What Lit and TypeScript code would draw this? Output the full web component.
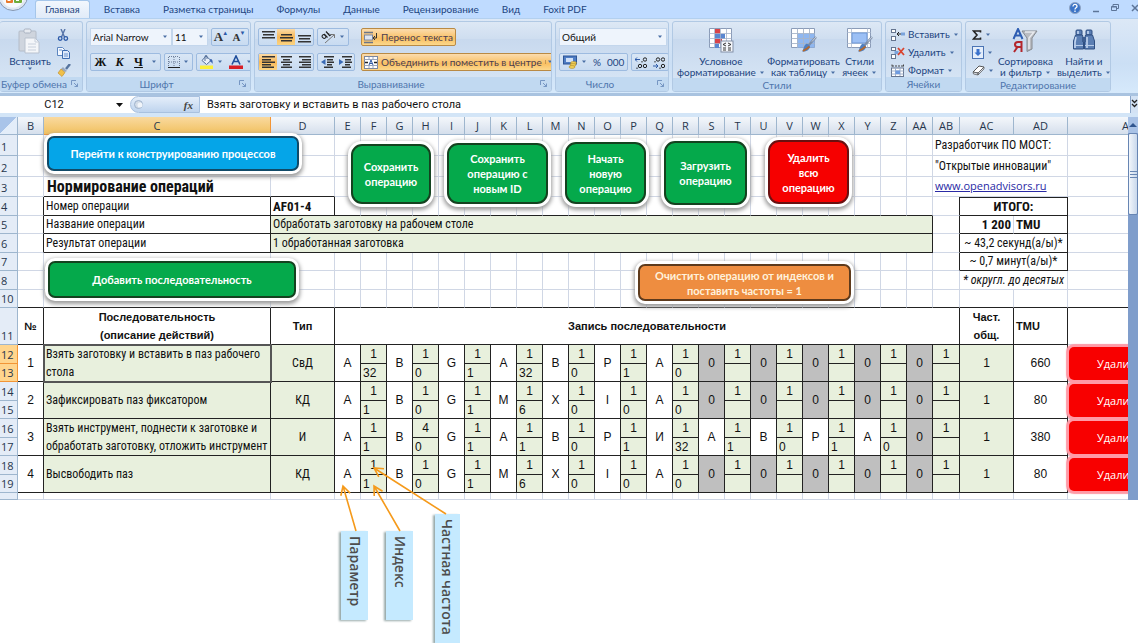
import { LitElement, html, css, svg, nothing } from "lit";
import { customElement, property } from "lit/decorators.js";
import { classMap } from "lit/directives/class-map.js";

const caret = html`<svg class="caret" width="6" height="4" viewBox="0 0 6 4"><path d="M1 .5h4L3 3z" fill="#4a6fa5" /></svg>`;

const lines = (rows: number[][]) =>
  svg`${rows.map(([x, y, w]) => svg`<rect x=${x} y=${y} width=${w} height="1.5" fill="#333" />`)}`;

const brush = svg`<path d="M25 7l-8 9" stroke="#7d8ea8" stroke-width="2.4" /><path d="M25 7l-4 4.500" stroke="#c8d2e2" stroke-width="1" /><path d="M16 13.500l3 2.500c0 4-4 6-8 5.500 2-2 1-6 5-8z" fill="#4f7fc0" /><path d="M12 21l4-2.500 2.500-2" stroke="#b5682c" stroke-width="2" fill="none" />`;

const icons: Record<string, unknown> = {
  paste: html`<svg width="24" height="26" viewBox="0 0 24 26"><rect x="1" y="3" width="17" height="20" rx="1" fill="#cfd5de" stroke="#b4bcc8" /><rect x="6" y="1" width="7" height="4" rx="1.500" fill="#e6eaf0" stroke="#a9b2c0" /><path d="M7 10h10l4 4v11H7z" fill="#f4f6f9" stroke="#b9c2cf" /><path d="M17 10v4h4M10 16h8M10 19h8M10 22h8" stroke="#c8d0dc" fill="none" /></svg>`,
  cut: html`<svg width="12" height="12" viewBox="0 0 12 12"><path d="M4 0l3.500 8M8 0L4.500 8" stroke="#5674a8" stroke-width="1.400" /><circle cx="3.200" cy="9.500" r="1.800" fill="none" stroke="#2c5aa8" stroke-width="1.300" /><circle cx="8.800" cy="9.500" r="1.800" fill="none" stroke="#2c5aa8" stroke-width="1.300" /></svg>`,
  copy: html`<svg width="14" height="12" viewBox="0 0 14 12"><path d="M.5.5h5l2 2v6h-7z" fill="#f4f8ff" stroke="#5c86c0" /><path d="M5.500 3.500h5l2 2v6h-7z" fill="#dfeafb" stroke="#3f6db0" /><path d="M7 7h4M7 9h4M2 3h3" stroke="#6b93cc" /></svg>`,
  painter: html`<svg width="14" height="13" viewBox="0 0 14 13"><path d="M13 0L9 5" stroke="#56749f" stroke-width="2.400" /><path d="M6 3l4 4-2 1-4-3z" fill="#9aa8bd" /><path d="M4 5l4 3.500-3 4L1 9z" fill="#f0c04a" stroke="#c08a20" stroke-width=".6" /></svg>`,
  borders: html`<svg width="12" height="12" viewBox="0 0 12 12"><path d="M.5 1v10M6 1v10M11.500 1v10M1 .5h10M1 6h10" stroke="#6c7d98" stroke-dasharray="1 1" /><path d="M0 11.500h12" stroke="#222" /></svg>`,
  fill: html`<svg width="14" height="14" viewBox="0 0 14 14"><path d="M6 1l5 4.500-4.500 4L2 5.500z" fill="#e9f0fa" stroke="#55709a" /><path d="M5 6V1.500c0-1.500 2-1.500 2 0V4" stroke="#55709a" fill="none" /><path d="M10.500 4c2 0 2.500 2.500 2 5-1-2-2-2.500-3-3z" fill="#3a64b0" /><rect y="10.500" width="13" height="3.500" fill="#fbf03a" /></svg>`,
  fontColor: html`<svg width="14" height="14" viewBox="0 0 14 14"><path d="M3 9.500L7 1l4 8.500M4.500 6.500h5" stroke="#1f4e9c" stroke-width="1.600" fill="none" /><rect y="10.500" width="14" height="3.500" fill="#d81f26" /></svg>`,
  top: html`<svg width="13" height="12" viewBox="0 0 13 12">${lines([[0, 0, 13], [1, 3, 11], [0, 6, 13]])}</svg>`,
  middle: html`<svg width="13" height="12" viewBox="0 0 13 12">${lines([[1, 3, 11], [0, 6, 13], [1, 9, 11]])}</svg>`,
  bottom: html`<svg width="13" height="12" viewBox="0 0 13 12">${lines([[0, 4, 13], [1, 7, 11], [0, 10, 13]])}</svg>`,
  left: html`<svg width="13" height="12" viewBox="0 0 13 12">${lines([[0, 0, 13], [0, 3, 9], [0, 5.5, 13], [0, 8, 9], [0, 10.5, 12]])}</svg>`,
  center: html`<svg width="13" height="12" viewBox="0 0 13 12">${lines([[1, 0, 11], [3, 3, 7], [1, 5.5, 11], [3, 8, 7], [1, 10.5, 11]])}</svg>`,
  right: html`<svg width="13" height="12" viewBox="0 0 13 12">${lines([[1, 0, 12], [4, 3, 9], [1, 5.5, 12], [4, 8, 9], [1, 10.5, 12]])}</svg>`,
  outdent: html`<svg width="13" height="12" viewBox="0 0 13 12">${lines([[3, 0, 10], [6, 3, 6], [6, 5.5, 7], [6, 8, 5], [3, 10.5, 9]])}<path d="M4.500 3v6L0 6z" fill="#3a6ab5" /></svg>`,
  indent: html`<svg width="13" height="12" viewBox="0 0 13 12">${lines([[3, 0, 10], [6, 3, 6], [6, 5.5, 7], [6, 8, 5], [3, 10.5, 9]])}<path d="M0 3v6l4.500-3z" fill="#3a6ab5" /></svg>`,
  orient: html`<svg width="15" height="13" viewBox="0 0 15 13"><path d="M4 12L13 4M10 3.500h3.500V7" stroke="#777" fill="none" /><ellipse cx="3" cy="5.500" rx="2" ry="1.700" fill="none" stroke="#222" transform="rotate(45 3 5.500)" /><path d="M3 3l3.500 3.500M5 .5L9 5M10 3.500c-1 1.500-3 1-2-1" stroke="#222" fill="none" stroke-width="1.200" /></svg>`,
  wrap: html`<svg width="14" height="13" viewBox="0 0 14 13"><path d="M0 1.500h9M0 11.500h9" stroke="#6b7588" stroke-width="1.500" /><rect x=".5" y="4" width="8" height="5" fill="#dfe5ef" stroke="#7a86a0" /><path d="M12.500 2v5H9.500M11 5L9 7l2 2" stroke="#333" fill="none" /></svg>`,
  merge: html`<svg width="14" height="13" viewBox="0 0 14 13"><rect x=".5" y=".5" width="13" height="12" fill="#fff" stroke="#7a86a0" /><path d="M.5 3.500h13M.5 9.500h13M5 1v3M9 1v3M5 9v3M9 9v3" stroke="#9aa6bd" /><path d="M1 6.500h3M10 6.500h3" stroke="#222" stroke-width="1.500" /><path d="M5 9l2-5 2 5M6 7.500h2" stroke="#2c57a5" fill="none" /></svg>`,
  money: html`<svg width="15" height="14" viewBox="0 0 15 14"><rect x=".5" y="1" width="13" height="8" fill="#4f7dc4" stroke="#2d5596" /><rect x="3" y="3" width="7" height="4" fill="#cfe0f8" /><ellipse cx="10.500" cy="8" rx="3" ry="1.400" fill="#f3d25c" stroke="#ae8a1f" stroke-width=".6" /><ellipse cx="10" cy="10" rx="3" ry="1.400" fill="#f3d25c" stroke="#ae8a1f" stroke-width=".6" /><ellipse cx="9" cy="12" rx="3" ry="1.400" fill="#f3d25c" stroke="#ae8a1f" stroke-width=".6" /></svg>`,
  cond: html`<svg width="26" height="25" viewBox="0 0 26 25"><path d="M1.500.5h22v19h-22z" fill="#fff" stroke="#8b9cb8" /><rect x="7" y="1" width="5" height="5" fill="#d8434a" /><rect x="7" y="6" width="10" height="5" fill="#5a86d0" /><rect x="7" y="11" width="7" height="5" fill="#d8434a" /><rect x="7" y="16" width="4" height="4" fill="#5a86d0" /><path d="M1.500 5.500h22M1.500 10.500h22M1.500 15.500h22M6.500.5v19M12.500.5v19M18.500.5v19" stroke="#a6b4ca" stroke-width=".8" /><rect x="13" y="13" width="12" height="11" fill="#f4f6fa" stroke="#8290a8" /><path d="M18 15l-3 1.500 3 1.500M15 20h3M15 22h3M20 15l3 1.500-3 1.500M20 20h3M20 22h3" stroke="#222" fill="none" stroke-width=".9" /></svg>`,
  tableFmt: html`<svg width="26" height="25" viewBox="0 0 26 25"><path d="M.5.500h23v19H.5z" fill="#fff" stroke="#8b9cb8" /><path d="M6 5.500h17.500v14H6z" fill="#8fb7f0" /><path d="M.5 5.500h23M.5 10.500h23M.5 15.500h23M6.500.5v19M12.500.5v19M18.500.5v19" stroke="#a6b4ca" stroke-width=".9" /><g transform="translate(0 2)">${brush}</g></svg>`,
  cellFmt: html`<svg width="26" height="25" viewBox="0 0 26 25"><path d="M.5.500h23v19H.5z" fill="#fff" stroke="#8b9cb8" /><path d="M.5 4.500h23M.5 15.500h23M4.500.5v19M20.500.5v19" stroke="#b6c2d4" stroke-width=".9" /><rect x="5" y="5" width="15" height="10" fill="#9cc0f5" stroke="#6f97d6" /><g transform="translate(0 2)">${brush}</g></svg>`,
  insert: html`<svg width="14" height="12" viewBox="0 0 14 12"><rect x=".5" y=".5" width="4" height="3" fill="#fff" stroke="#66758f" /><rect x=".5" y="7.500" width="4" height="4" fill="#fff" stroke="#66758f" /><path d="M13 5H6M8 3L6 5l2 2" stroke="#222" fill="none" /><rect x="10" y="3.500" width="4" height="3" fill="#7aa3dc" /></svg>`,
  remove: html`<svg width="14" height="12" viewBox="0 0 14 12"><rect x=".5" y=".5" width="4" height="3" fill="#fff" stroke="#66758f" /><rect x=".5" y="7.500" width="4" height="4" fill="#fff" stroke="#66758f" /><rect x="3.500" y="4" width="4" height="3" fill="#7aa3dc" /><path d="M7 1l6 7M13 1L7 8" stroke="#d9442f" stroke-width="1.800" /></svg>`,
  format: html`<svg width="14" height="13" viewBox="0 0 14 13"><path d="M1 .5v3M12.500 .5v3M1 2h11" stroke="#444" stroke-dasharray="2 1" /><rect x=".5" y="4" width="12" height="8.500" fill="#fff" stroke="#66758f" /><path d="M.5 7h12M.5 10h12M4.500 4v8M9 4v8" stroke="#9fb0cb" /><rect x="4.500" y="6.500" width="4.500" height="3.500" fill="#6f9be0" /></svg>`,
  sum: html`<svg width="10" height="10" viewBox="0 0 10 10"><path d="M8.500 2.500V1H1.500l3.500 4-3.500 4h7V7.500" fill="none" stroke="#222" stroke-width="1.600" /></svg>`,
  down: html`<svg width="12" height="13" viewBox="0 0 12 13"><rect x=".5" y=".5" width="11" height="12" fill="#e4eefb" stroke="#4b74b4" /><path d="M4.500 3h3v3.500h2L6 10 2.500 6.500h2z" fill="#3a72cc" /></svg>`,
  eraser: html`<svg width="13" height="11" viewBox="0 0 13 11"><path d="M1 7l6-6 5 1-6 6z" fill="#fff" stroke="#555" /><path d="M1 7l5 1v2L1.500 9zM6 8l6-6v2l-6 6z" fill="#d8dde6" stroke="#555" stroke-width=".7" /></svg>`,
  sort: html`<svg width="26" height="26" viewBox="0 0 26 26"><path d="M10 3h15l-5 7v11l-5 2.500V10z" fill="#b9bcc2" stroke="#85898f" /><path d="M13 4h9l-5 6v11" fill="none" stroke="#e8eaee" stroke-width="1.500" /><path d="M1.500 11L6 1l4.500 10M3 7.500h6" stroke="#2d5db2" stroke-width="2" fill="none" /><path d="M9.500 24V14H6c-4 0-4 5 0 5h3M5.500 19L2 24" stroke="#b3262c" stroke-width="2" fill="none" /></svg>`,
  find: html`<svg width="24" height="24" viewBox="0 0 24 24"><g fill="#5b7fb4" stroke="#2f4f82"><rect x="4" y="2" width="6" height="5" rx="1" /><rect x="14" y="2" width="6" height="5" rx="1" /><path d="M3.500 7h7l1 5v9h-10v-8zM13.500 7h7l2 6v8h-10v-9z" /></g><rect x="10" y="9" width="4" height="5" fill="#3c5d91" /><path d="M4 9l-1 5v6M15 9v11M6 3v3M16 3v3" stroke="#c6d8f2" stroke-width="1.600" fill="none" /><path d="M2 17.500h9M13 17.500h9" stroke="#b9cdea" /></svg>`,
};

const launcher = html`<svg class="launch" width="7" height="7" viewBox="0 0 7 7"><path d="M.5 5V.5H5M3 3l3.500 3.500M6.500 3.500v3h-3" stroke="#6d8fbd" fill="none" stroke-width=".9" /></svg>`;

@customElement("ribbon-bar")
export class RibbonBar extends LitElement {
  static styles = css`
    :host { display: block; font: 10px/11px Lato, "Noto Sans", sans-serif; color: #1c4480; background: #bfdbff; }
    button, select { font: inherit; color: inherit; background: none; border: 0; padding: 0; margin: 0; white-space: nowrap; }
    svg { display: block; flex: none; }
    .tabs { display: flex; height: 18px; align-items: stretch; overflow: hidden; position: relative; padding-left: 35px; }
    .tab { padding: 0 10px; margin-right: 3px; border-radius: 3px 3px 0 0; }
    .tab.on { background: linear-gradient(#f2f7fd, #e1ebf8); border: 1px solid #a5c6ea; border-bottom: 0; padding: 0 9px; margin-right: 4px; }
    .orb { position: absolute; left: -2px; top: -19px; }
    .win { margin-left: auto; display: flex; align-items: center; gap: 12px; }
    .win svg { margin-top: -3px; }
    .panel { display: flex; gap: 3px; height: 75px; box-sizing: border-box; padding: 2px 0 1px; background: linear-gradient(#dce8f6, #cbdff5 60%, #d6e9fb); border-top: 1px solid #b3d0ef; overflow: hidden; }
    .group { flex: none; display: flex; flex-direction: column; box-sizing: border-box; border: 1px solid #b1c9e4; border-radius: 3px; overflow: hidden; background: linear-gradient(#dde8f5, #cfdef0 24%, #c8d9ee 25%, #d9e7f6); }
    .g1 { width: 83px; border-left: 0; } .g2 { width: 165px; } .g3 { width: 298px; } .g4 { width: 114px; } .g5 { width: 210px; } .g6 { width: 77px; } .g7 { width: 146px; }
    .body { flex: 1; display: flex; padding: 6px 3px 0; align-items: flex-start; }
    .cap { height: 14px; line-height: 14px; text-align: center; color: #4f76ad; background: #c1d9f1; position: relative; }
    .launch { position: absolute; right: 4px; top: 3px; }
    .room { padding-right: 24px; }
    .g1 .cap { padding-right: 14px; white-space: nowrap; }
    .rows { display: flex; flex-direction: column; gap: 7px; }
    .row { display: flex; gap: 3px; height: 18px; }
    .set { display: flex; align-items: stretch; border: 1px solid #9dbbe0; border-radius: 2px; background: linear-gradient(#d9e6f5, #c8dbf1); }
    .set button { display: flex; align-items: center; justify-content: center; gap: 3px; padding: 0 3px; }
    .set .on { background: linear-gradient(#fbdba8, #f8b858 50%, #fbd483); }
    .sel { position: relative; display: flex; align-items: center; background: #eef4fc; border: 1px solid #c3d6ec; box-sizing: border-box; }
    .sel select { appearance: none; width: 100%; height: 100%; padding-left: 2px; color: #111; font-size: 10px; }
    .sel .caret { position: absolute; right: 3px; }
    .w-font { width: 82px; } .w-size { width: 36px; margin-left: -3px; } .w-num { width: 108px; }
    .w-b, .w-al { width: 18px; box-sizing: border-box; }
    .bold { font: bold 12px "Liberation Serif", serif; color: #111; width: 19px; }
    .it { font-style: italic; }
    .un { text-decoration: underline; }
    .big-a { font: bold 13px "Liberation Serif", serif; color: #333; width: 18px; }
    .small-a { font-size: 11px; }
    .sup { font-size: 6px; align-self: flex-start; margin: 1px 0 0 -4px; color: #2c5aa8; }
    .split { width: 1px; height: 46px; background: #a9c3e2; margin: 0 3px; }
    .hot { display: flex; align-items: center; gap: 3px; height: 18px; box-sizing: border-box; border: 1px solid #b98a45; border-radius: 2px; background: linear-gradient(#fbdcae, #f9bf62 60%, #fcd88c); padding: 0 2px; color: #4a3d50; align-self: flex-start; }
    .hot .caret { border-left: 1px solid #c99a50; padding-left: 1px; }
    .large { display: flex; flex-direction: column; align-items: center; }
    .large .ico { height: 28px; }
    .large .two { display: flex; align-items: center; gap: 3px; }
    .styles { justify-content: space-between; padding-left: 4px; padding-right: 4px; }
    .mini { display: flex; flex-direction: column; gap: 5px; }
    .mini button { display: flex; align-items: center; gap: 3px; height: 13px; }
    .clip .large { width: 46px; margin: 0 4px 0 3px; }
    .clip { padding-left: 4px; }
    .cells { padding-left: 5px; } .edit { padding-left: 6px; gap: 4px; }
  `;
  render() {
    const tabs = ["Главная", "Вставка", "Разметка страницы", "Формулы", "Данные", "Рецензирование", "Вид", "Foxit PDF"];
    const b = (name: string, on = false, cls = "w-al") => html`<button class=${`${cls} ${on ? "on" : ""}`} aria-label=${name}>${icons[name]}</button>`;
    const large = (name: string, first: string, second: string) => html`<button class="large"><span class="ico">${icons[name]}</span><span>${first}</span><span class="two">${second}${caret}</span></button>`;
    return html`
      <div class="tabs" role="tablist">
        <svg class="orb" width="32" height="32" viewBox="0 0 32 32"><circle cx="15" cy="15" r="14.500" fill="#dfe7f1" stroke="#8597b2" /><circle cx="15" cy="15" r="11.500" fill="#f7f9fc" /><rect x="8" y="14" width="7" height="8" rx="1" fill="#e8792c" /><rect x="9.500" y="17" width="3" height="3" fill="#fff" /><rect x="16" y="13" width="8" height="9" rx="1" fill="#6fae3a" /><rect x="18" y="16" width="3" height="4" fill="#fff" /></svg>
        ${tabs.map((t, i) => html`<button role="tab" class=${classMap({ tab: true, on: i === 0 })}>${t}</button>`)}
        <span class="win">
          <svg width="12" height="12" viewBox="0 0 12 12"><circle cx="6" cy="6" r="5.500" fill="#3b74c8" stroke="#8fa4c4" /><path d="M4 4.500c0-3 4-2.500 4-.3C8 6 6 5.500 6 7.500M6 8.500v1.500" stroke="#fff" fill="none" stroke-width="1.300" /></svg>
          <svg width="6" height="10" viewBox="0 0 6 10"><path d="M0 8.500h6" stroke="#5d7598" stroke-width="1.500" /></svg>
          <svg width="8" height="8" viewBox="0 0 8 8"><path d="M2 2V.5h5.500v4H6M.5 2.500h5v4h-5zM.5 3h5" stroke="#5d7598" fill="none" /></svg>
          <svg width="7" height="8" viewBox="0 0 7 8"><path d="M1 1l6 6M7 1L1 7" stroke="#5d7598" stroke-width="1.500" /></svg>
        </span>
      </div>
      <div class="panel">
        <section class="group g1"><div class="body clip">
          <button class="large"><span class="ico">${icons.paste}</span><span>Вставить</span><span>${caret}</span></button>
          <div class="mini">${["cut", "copy", "painter"].map((n) => html`<button aria-label=${n}>${icons[n]}</button>`)}</div>
        </div><div class="cap">Буфер обмена${launcher}</div></section>
        <section class="group g2"><div class="body"><div class="rows">
          <div class="row">
            <label class="sel w-font"><select aria-label="Шрифт"><option>Arial Narrow</option></select>${caret}</label>
            <label class="sel w-size"><select aria-label="Размер"><option>11</option></select>${caret}</label>
            <span class="set"><button class="big-a">A<span class="sup">▲</span></button><button class="big-a small-a">A<span class="sup">▼</span></button></span>
          </div>
          <div class="row">
            <span class="set"><button class="bold">Ж</button><button class="bold it">К</button><button class="bold un">Ч</button><button aria-label="Подчёркивание">${caret}</button></span>
            <span class="set"><button aria-label="Границы">${icons.borders}${caret}</button></span>
            <span class="set"><button aria-label="Заливка">${icons.fill}${caret}</button><button aria-label="Цвет">${icons.fontColor}${caret}</button></span>
          </div></div>
        </div><div class="cap room">Шрифт${launcher}</div></section>
        <section class="group g3"><div class="body"><div class="rows">
          <div class="row"><span class="set">${b("top")}${b("middle", true)}${b("bottom")}</span><span class="set"><button aria-label="Ориентация">${icons.orient}${caret}</button></span></div>
          <div class="row"><span class="set">${b("left", true)}${b("center")}${b("right")}</span><span class="set">${b("outdent", false, "w-b")}${b("indent", false, "w-b")}</span></div>
        </div><span class="split"></span><div class="rows">
          <button class="hot">${icons.wrap}Перенос текста</button>
          <button class="hot">${icons.merge}Объединить и поместить в центре${caret}</button>
        </div></div><div class="cap room">Выравнивание${launcher}</div></section>
        <section class="group g4"><div class="body"><div class="rows">
          <div class="row"><label class="sel w-num"><select aria-label="Формат числа"><option>Общий</option></select>${caret}</label></div>
          <div class="row"><span class="set"><button aria-label="Финансовый">${icons.money}${caret}</button><button>%</button><button>000</button></span>
            <span class="set"><button aria-label="Увеличить разрядность"><svg width="12" height="13" viewBox="0 0 12 13"><path d="M0 3.500h5M2 1.500l-2 2 2 2" stroke="#2c5aa8" fill="none" /><circle cx="10" cy="3.500" r="1.700" fill="none" stroke="#222" /><circle cx="5" cy="10" r="1.700" fill="none" stroke="#222" /><circle cx="10" cy="10" r="1.700" fill="none" stroke="#222" /><path d="M7 5v1.500M2 11.500V13" stroke="#222" /></svg></button><button aria-label="Уменьшить разрядность"><svg width="12" height="13" viewBox="0 0 12 13"><path d="M0 10h5M3 8l2 2-2 2" stroke="#2c5aa8" fill="none" /><circle cx="5" cy="3.500" r="1.700" fill="none" stroke="#222" /><circle cx="10" cy="3.500" r="1.700" fill="none" stroke="#222" /><circle cx="10" cy="10" r="1.700" fill="none" stroke="#222" /><path d="M2 5v1.500M7 11.500V13" stroke="#222" /></svg></button></span></div>
        </div></div><div class="cap room">Число${launcher}</div></section>
        <section class="group g5"><div class="body styles">
          ${large("cond", "Условное", "форматирование")}${large("tableFmt", "Форматировать", "как таблицу")}${large("cellFmt", "Стили", "ячеек")}
        </div><div class="cap">Стили</div></section>
        <section class="group g6"><div class="body cells"><div class="mini">
          <button>${icons.insert}Вставить${caret}</button><button>${icons.remove}Удалить${caret}</button><button>${icons.format}Формат${caret}</button>
        </div></div><div class="cap">Ячейки</div></section>
        <section class="group g7"><div class="body edit"><div class="mini">
          ${["sum", "down", "eraser"].map((n) => html`<button aria-label=${n}>${icons[n]}${caret}</button>`)}
        </div>${large("sort", "Сортировка", "и фильтр")}${large("find", "Найти и", "выделить")}
        </div><div class="cap">Редактирование</div></section>
      </div>`;
  }
}

@customElement("formula-bar")
export class FormulaBar extends LitElement {
  static styles = css`
    :host { display: flex; height: 24px; box-sizing: border-box; border-top: 3px solid #a9c3e0; border-bottom: 4px solid #d3e5f7; background: #fff; font: 11px/16px Roboto, "Noto Sans", sans-serif; }
    input { font: inherit; border: 0; padding: 0; margin: 0; outline: 0; background: #fff; color: #111; min-width: 0; }
    .name { width: 108px; text-align: center; }
    .drop, .more { border: 0; padding: 0; background: none; }
    .drop { width: 22px; }
    .drop svg { display: block; margin: auto; }
    .fx { width: 70px; box-sizing: border-box; border: 1px solid #a9c1df; border-radius: 9px 0 0 9px; background: linear-gradient(#e4eefa, #bfd4ee); display: flex; justify-content: space-between; align-items: center; padding: 0 6px 0 3px; font: italic bold 11px "Liberation Serif", serif; color: #444; }
    .text { flex: 1; padding-left: 7px; }
    .more { width: 8px; background: #d3e2f4; border-left: 1px solid #8aa5c9; }
  `;
  render() {
    return html`<input class="name" aria-label="Имя" value="C12" />
      <button class="drop" aria-label="Список имён"><svg width="7" height="4" viewBox="0 0 7 4"><path d="M0 0h7L3.500 4z" fill="#111" /></svg></button>
      <span class="fx"><svg width="9" height="9" viewBox="0 0 9 9"><circle cx="4.500" cy="4.500" r="4" fill="#d3dce8" stroke="#9fb3cc" /><circle cx="6" cy="5" r="2.500" fill="#f1f5fa" /></svg><span>fx</span></span>
      <input class="text" aria-label="Строка формул" value="Взять заготовку и вставить в паз рабочего стола" />
      <button class="more" aria-label="Развернуть"><svg width="7" height="10" viewBox="0 0 7 10"><path d="M1 1l2.500 2.500L6 1M1 5l2.500 2.500L6 5" stroke="#222" fill="none" stroke-width="1.300" /></svg></button>`;
  }
}

interface Step { no: number; text: string; type: string; letters: string[]; freq: string[]; index: string[]; tmu: number; }

const ones = () => Array(12).fill("1");
const pad = (s: string, filler: string) => { const a = s.split(" "); return [...a, ...Array(12 - a.length).fill(filler)]; };
const steps: Step[] = [
  { no: 1, text: "Взять заготовку и вставить в паз рабочего стола", type: "СвД", letters: pad("A B G A B P A", "0"), freq: ones(), index: pad("32 0 1 32 0 1 0", ""), tmu: 660 },
  { no: 2, text: "Зафиксировать паз фиксатором", type: "КД", letters: pad("A B G M X I A", "0"), freq: ones(), index: pad("1 0 1 6 0 0 0", ""), tmu: 80 },
  { no: 3, text: "Взять инструмент, поднести к заготовке и обработать заготовку, отложить инструмент", type: "И", letters: pad("A B G A B P И A B P A", "0"), freq: ["1", "4", ...Array(10).fill("1")], index: pad("1 0 1 1 0 1 32 1 0 1 0", ""), tmu: 380 },
  { no: 4, text: "Высвободить паз", type: "КД", letters: pad("A B G M X I A", "0"), freq: ones(), index: pad("1 0 1 6 0 0 0", ""), tmu: 80 },
];

const letters = "BCDEFGHIJKLMNOPQRSTUVWXYZ".split("").concat(["AA", "AB", "AC", "AD", "AE"]);

@customElement("work-sheet")
export class WorkSheet extends LitElement {
  static styles = css`
    :host { display: flex; font: 12px/17px "Liberation Sans Narrow", "Roboto Condensed", "Liberation Sans", sans-serif; color: #111; }
    .grid { flex: 1; min-width: 0; overflow: hidden; position: relative; }
    table { table-layout: fixed; width: 1190px; border-collapse: separate; border-spacing: 0; }
    .c0 { width: 18px; } .c1 { width: 26px; } .cC { width: 227px; } .cD { width: 64px; } .cW { width: 27px; } .cS { width: 54px; } .cE { width: 122px; }
    th, td { box-sizing: border-box; padding: 0; border: 0 solid #d0d7e5; border-width: 0 1px 1px 0; font-weight: normal; overflow: hidden; white-space: nowrap; }
    tr { height: 18px; }
    .h7 { height: 7px; } .h19 { height: 19px; } .h20 { height: 20px; } .h21 { height: 21px; } .h37 { height: 37px; }
    thead th { height: 18px; font: 11px/16px "Open Sans", "Noto Sans", sans-serif; color: #27364c; background: linear-gradient(#f4f7fb, #d5dfec); border-color: #9eb6ce; }
    thead .on { background: linear-gradient(#f9d99f, #f1c15f); border-color: #f29536; }
    thead .corner { background: linear-gradient(135deg, #a9c4e9 50%, #e3edf9 50%); }
    .rn { font: 11px/16px "Open Sans", "Noto Sans", sans-serif; color: #27364c; background: #e4ecf7; border-color: #9eb6ce; text-align: left; vertical-align: bottom; padding-left: 1px; }
    .rn.on { background: #ffd58d; border-color: #f29536; }
    .rn.tiny { line-height: 7px; }
    .r { border-right-color: #222; } .b { border-bottom-color: #222; } .t { border-top: 1px solid #222; line-height: 16px; }
    .l { padding-left: 2px; }
    .c { text-align: center; } .e { text-align: right; padding-right: 2px; }
    .g { background: #e8f0dd; } .x { background: #bfbfbf; }
    .wide { font: 12px/16px "Liberation Sans", sans-serif; }
    .bold { font-weight: bold; font-size: 13px; }
    .head { font: bold 11px/18px "Liberation Sans", sans-serif; white-space: normal; }
    .title { font-size: 16px; font-weight: bold; padding-left: 3px; }
    .desc { white-space: normal; line-height: 18px; padding-left: 2px; }
    .it { font-style: italic; }
    .sel { outline: 2px solid #555; outline-offset: -1px; }
    a { font: 11px/16px "Open Sans", "Noto Sans", sans-serif; color: #2a2aa5; }
    button { font: bold 11px/15px Lato, "Noto Sans", sans-serif; color: #fff; border: 2px solid #14421f; cursor: pointer; }
    .float { position: absolute; box-sizing: border-box; padding: 0 8px; border-radius: 7px; background: #05a94b; box-shadow: 0 0 0 3px #fff, 0 2px 4px 4px #9a9a9a; }
    .tall { border-radius: 11px; }
    .blue { background: #05a5e8; border-color: #104a68; } .red { background: #f60000; border-color: #6a1010; } .orange { background: #ee8d40; border-color: #5d3a1c; color: #fff2dc; }
    .go { left: 47px; top: 19px; width: 252px; height: 35px; }
    .add { left: 48px; top: 144px; width: 248px; height: 37px; }
    .save { left: 351px; top: 27px; width: 80px; height: 60px; }
    .copy { left: 447px; top: 26px; width: 101px; height: 61px; }
    .new { left: 565px; top: 25px; width: 81px; height: 62px; }
    .load { left: 664px; top: 24px; width: 83px; height: 64px; }
    .kill { left: 768px; top: 23px; width: 81px; height: 64px; }
    .clear { left: 638px; top: 147px; width: 213px; height: 37px; }
    .del { display: block; width: 118px; height: 33px; margin: 1px 0 0 1px; padding: 0 0 0 28px; text-align: left; font: 11px/15px "Open Sans", "Noto Sans", sans-serif; border: 0; border-radius: 5px; background: #f80000; box-shadow: 0 0 1px 3px #ff9aa6; }
    .act { overflow: visible; }
    .scroll { width: 10px; background: #7f9dcb; display: flex; flex-direction: column; }
    .up { height: 16px; background: #a9c2e6; display: grid; place-items: center; }
    .thumb { height: 82px; box-sizing: border-box; background: linear-gradient(90deg, #f2f6fb, #c9d8ec); border: 1px solid #6785b3; border-radius: 2px; display: grid; place-items: center; }
  `;

  private empty(n: number, cls = "") { return Array.from({ length: n }, () => html`<td class=${cls}></td>`); }
  private num(n: string, on = false) { return html`<th scope="row" class=${classMap({ rn: true, on })}>${n}</th>`; }

  private pair(s: Step, i: number) {
    const first = 12 + i * 2;
    return html`
      <tr class="h19">${this.num(String(first), i === 0)}
        <td rowspan="2" class="wide c r b">${s.no}</td>
        <td rowspan="2" class=${classMap({ desc: true, g: true, r: true, b: true, sel: i === 0 })}>${s.text}</td>
        <td rowspan="2" class="c g r b">${s.type}</td>
        ${s.letters.map((x, k) => html`<td rowspan="2" class=${classMap({ wide: true, c: true, r: true, b: true, x: x === "0" })}>${x}</td><td class="wide c g r b">${s.freq[k]}</td>`)}
        <td rowspan="2" class="wide c g r b">1</td><td rowspan="2" class="wide c r b">${s.tmu}</td>
        <td rowspan="2" class="act"><button class="del">Удалить</button></td></tr>
      <tr>${this.num(String(first + 1), i === 0)}${s.index.map((x) => html`<td class="wide l g r b">${x}</td>`)}</tr>`;
  }

  render() {
    return html`<div class="grid">
        <table>
          <colgroup><col class="c0" /><col class="c1" /><col class="cC" /><col class="cD" />${Array.from({ length: 23 }, () => html`<col class="c1" />`)}<col class="cW" /><col class="cS" /><col class="cS" /><col class="cE" /></colgroup>
          <thead><tr><th class="corner"></th>${letters.map((l) => html`<th scope="col" class=${l === "C" ? "on" : nothing}>${l}</th>`)}</tr></thead>
          <tbody>
            <tr class="h21">${this.num("1")}${this.empty(26)}<td colspan="3" class="l">Разработчик ПО МОСТ:</td><td></td></tr>
            <tr class="h21">${this.num("2")}${this.empty(26)}<td colspan="3" class="l">"Открытые инновации"</td><td></td></tr>
            <tr class="h20">${this.num("3")}<td></td><td class="title b">Нормирование операций</td><td class="b"></td>${this.empty(23)}<td colspan="3" class="l"><a href="#">www.openadvisors.ru</a></td><td></td></tr>
            <tr class="h19">${this.num("4")}<td class="r"></td><td class="l r b">Номер операции</td><td class="l bold r b">AF01-4</td>${this.empty(23, "b")}<td class="r"></td><td colspan="2" class="c bold r b t">ИТОГО:</td><td></td></tr>
            <tr>${this.num("5")}<td class="r"></td><td class="l r b">Название операции</td><td colspan="24" class="l g r b">Обработать заготовку на рабочем столе</td><td class="r"></td><td class="e bold b">1 200</td><td class="l bold r b">TMU</td><td></td></tr>
            <tr class="h19">${this.num("6")}<td class="r"></td><td class="l r b">Результат операции</td><td colspan="24" class="l g r b">1 обработанная заготовка</td><td class="r"></td><td colspan="2" class="c r b">~ 43,2 секунд(а/ы)*</td><td></td></tr>
            <tr>${this.num("7")}${this.empty(26)}<td class="r"></td><td colspan="2" class="c r b">~ 0,7 минут(а/ы)*</td><td></td></tr>
            <tr class="h19">${this.num("8")}${this.empty(27)}<td colspan="2" class="c it">* округл. до десятых</td><td></td></tr>
            <tr>${this.num("10")}${this.empty(30, "b")}</tr>
            <tr class="h37">${this.num("11")}<td class="head c r b">№</td><td class="head c r b">Последовательность<br />(описание действий)</td><td class="head c r b">Тип</td><td colspan="24" class="head c r b">Запись последовательности</td><td class="head c r b">Част.<br />общ.</td><td class="head l r b">TMU</td><td></td></tr>
            ${steps.map((s, i) => this.pair(s, i))}
            <tr class="h7"><th class="rn tiny"></th>${this.empty(30)}</tr>
          </tbody>
        </table>
        <button class="float blue go">Перейти к конструированию процессов</button>
        <button class="float tall save">Сохранить операцию</button>
        <button class="float tall copy">Сохранить операцию с новым ID</button>
        <button class="float tall new">Начать новую операцию</button>
        <button class="float tall load">Загрузить операцию</button>
        <button class="float tall red kill">Удалить всю операцию</button>
        <button class="float add">Добавить последовательность</button>
        <button class="float orange clear">Очистить операцию от индексов и поставить частоты = 1</button>
      </div>
      <div class="scroll"><span class="up"><svg width="8" height="5" viewBox="0 0 8 5"><path d="M4 0l4 4H0z" fill="#31568f" /></svg></span><span class="thumb"><svg width="8" height="7" viewBox="0 0 8 7"><path d="M1 .5h7M1 3.500h7M1 6.500h7" stroke="#6785b3" /></svg></span></div>`;
  }
}

@customElement("sheet-note")
export class SheetNote extends LitElement {
  @property() text = "";
  static styles = css`
    :host { display: block; box-sizing: border-box; writing-mode: vertical-rl; background: #c5eaff; box-shadow: -2px 1px 2px #9aa; padding: 5px 0; font: 600 14px/26px "Open Sans", "Noto Sans", sans-serif; color: #4d4d4d; white-space: nowrap; }
  `;
  render() { return html`${this.text}`; }
}

@customElement("app-root")
export class AppRoot extends LitElement {
  static styles = css`
    :host { display: flex; flex-direction: column; height: 100vh; overflow: hidden; background: #fff; }
    .notes { flex: 1; min-height: 0; position: relative; display: flex; align-items: flex-start; padding: 14px 0 0 341px; }
    .short { height: 89px; margin: 17px 18px 0 0; width: 27px; }
    .long { width: 25px; align-self: stretch; margin-left: 4px; }
    .arrows { position: absolute; left: 334px; top: -40px; }
  `;
  private arrow(x1: number, y1: number, x2: number, y2: number) {
    const a = Math.atan2(y2 - y1, x2 - x1);
    const wing = (d: number) => `${x2 - 10 * Math.cos(a + d)} ${y2 - 10 * Math.sin(a + d)}`;
    return svg`<path d=${`M${x1} ${y1}L${x2} ${y2}M${wing(0.5)}L${x2} ${y2}L${wing(-0.5)}`} fill="none" stroke="#f59a1b" stroke-width="1.600" />`;
  }
  render() {
    return html`<ribbon-bar></ribbon-bar><formula-bar></formula-bar><work-sheet></work-sheet>
      <div class="notes">
        <sheet-note class="short" text="Параметр"></sheet-note>
        <sheet-note class="short" text="Индекс"></sheet-note>
        <sheet-note class="long" text="Частная частота"></sheet-note>
        <svg class="arrows" width="130" height="75" viewBox="0 0 130 75">${this.arrow(22, 71, 9, 26)}${this.arrow(66, 71, 40, 26)}${this.arrow(112, 54, 40, 8)}</svg>
      </div>`;
  }
}
